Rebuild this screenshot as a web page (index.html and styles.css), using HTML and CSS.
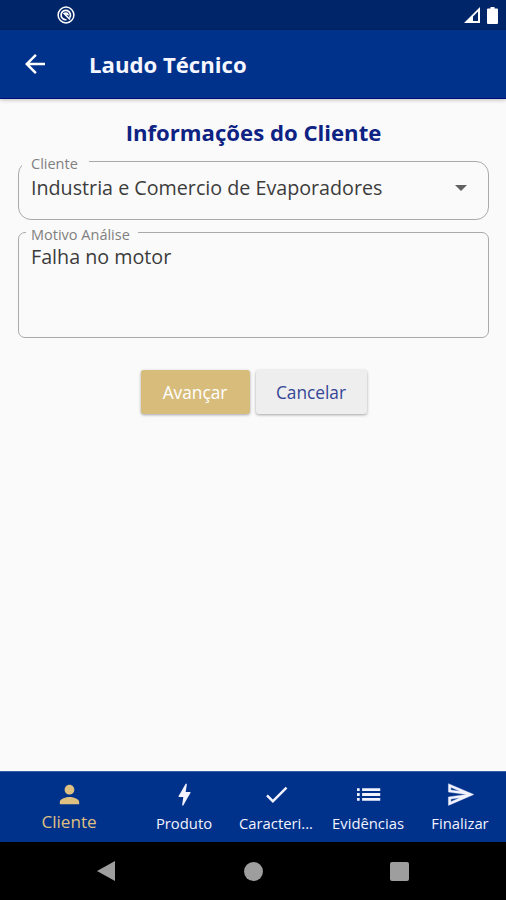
FILE: index.html
```html
<!DOCTYPE html>
<html lang="pt-BR">
<head>
<meta charset="utf-8">
<title>Laudo Técnico</title>
<link rel="stylesheet" href="styles.css">
</head>
<body>
<div class="status">
  <svg class="status-app" width="18" height="18" viewBox="0 0 18 18" fill="none" stroke="#fff"><circle cx="9" cy="9" r="7.9" stroke-width="1.5"/><path d="M12.600 11.800A4.700 4.700 0 1 0 9.500 13.700" stroke-width="1.700"/><path d="M6.500 7.200c2-2 5.300-1 5.500 2.300L9.500 9z" fill="#fff" stroke="none"/><path d="M6.500 7l6.500 6.500" stroke-width="1.600"/></svg>
  <svg class="signal" width="16" height="16" viewBox="0 0 16 16"><path fill="#fff" fill-rule="evenodd" d="M0 16L16 0v16zM9 9.500V14h5V4.600z"/></svg>
  <svg width="11" height="17" viewBox="0 0 11 17"><path fill="#fff" d="M3.500 0h4v1.500H10q1 0 1 1V16q0 1-1 1H1q-1 0-1-1V2.500q0-1 1-1h2.500z"/></svg>
</div>
<header class="appbar">
  <svg width="30" height="30" viewBox="0 0 24 24"><path fill="#fff" d="M20 11H7.830l5.590-5.590L12 4l-8 8 8 8 1.410-1.410L7.830 13H20z"/></svg>
  <h1>Laudo Técnico</h1>
</header>
<main>
  <h2>Informações do Cliente</h2>
  <fieldset class="field select">
    <legend><span>Cliente</span></legend>
    <div class="value"><span>Industria e Comercio de Evaporadores</span><svg width="12" height="6" viewBox="0 0 12 6"><path fill="#616161" d="M0 0h12L6 6z"/></svg></div>
  </fieldset>
  <fieldset class="field area">
    <legend><span>Motivo Análise</span></legend>
    <div class="value"><span>Falha no motor</span></div>
  </fieldset>
  <div class="actions">
    <button class="primary">Avançar</button>
    <button class="secondary">Cancelar</button>
  </div>
</main>
<nav class="tabs">
  <div class="tab active"><svg viewBox="0 0 24 24"><path d="M12 12c2.210 0 4-1.790 4-4s-1.790-4-4-4-4 1.790-4 4 1.790 4 4 4zm0 2c-2.670 0-8 1.340-8 4v2h16v-2c0-2.660-5.330-4-8-4z"/></svg><span>Cliente</span></div>
  <div class="tab"><svg viewBox="0 0 24 24"><path d="M11 21h-1l1-7H7.500c-.58 0-.57-.32-.38-.66C8.480 10.940 10.420 7.540 13 3h1l-1 7h3.500c.49 0 .56.330.470.510C12.960 17.550 11 21 11 21z"/></svg><span>Produto</span></div>
  <div class="tab"><svg viewBox="0 0 24 24"><path d="M9 16.170L4.830 12l-1.420 1.410L9 19 21 7l-1.410-1.410z"/></svg><span>Caracteri...</span></div>
  <div class="tab"><svg viewBox="0 0 24 24"><path d="M2.500 13.200h2.200v-2.400H2.500zm0 4h2.200v-2.400H2.500zm0-8h2.200V6.800H2.500zm4.200 4h15v-2.400h-15zm0 4h15v-2.400h-15zm0-10.400v2.400h15V6.800z"/></svg><span>Evidências</span></div>
  <div class="tab"><svg viewBox="0 0 24 24"><path d="M4.010 6.030l7.510 3.220-7.520-1 .010-2.220m7.500 8.720L4 17.970v-2.220l7.510-1M2.010 3L2 10l15 2-15 2 .010 7L23 12z" stroke="currentColor" stroke-width=".3"/></svg><span>Finalizar</span></div>
</nav>
<div class="system">
  <svg width="18" height="20" viewBox="0 0 18 20"><path fill="#9e9e9e" d="M18 0v20L0 10z"/></svg>
  <i class="home"></i>
  <i class="recent"></i>
</div>
</body>
</html>
```
FILE: styles.css
```css
* { box-sizing: border-box; }
body {
  margin: 0;
  height: 900px;
  display: flex;
  flex-direction: column;
  overflow: hidden;
  background: #fafafa;
  font-family: "Open Sans", "Noto Sans", sans-serif;
}
svg { display: block; flex: none; }
.status {
  height: 30px;
  display: flex;
  align-items: center;
  padding: 0 8px 0 57px;
  background: #002569;
}
.signal { margin: 0 7px 0 auto; }
.appbar {
  height: 69px;
  display: flex;
  align-items: center;
  padding: 0 20px;
  background: #00328c;
  border-bottom: 1px solid #000f78;
  box-shadow: 0 1px 4px rgba(0, 0, 0, .25);
}
h1 { margin: 0 0 0 39px; color: #f6f6ff; font-size: 22.150px; line-height: 30px; }
main { flex: 1; padding: 18px 17px 0 18px; }
h2 { margin: 0; text-align: center; color: #0e2284; font-size: 22.150px; line-height: 30px; }
.field {
  min-width: 0;
  margin: 0;
  padding: 0;
  border: 1.500px solid #aaa;
}
.field legend { height: 20px; padding: 0 9px; font-size: 14.500px; line-height: 16px; color: #808080; }
.field legend span { display: block; padding-top: 5px; }
.value { height: 20px; display: flex; align-items: center; justify-content: space-between; color: #3c3c3c; font-size: 19.700px; line-height: 20px; }
.select { height: 69px; margin-top: 4px; border-radius: 13px; }
.select legend { margin-left: 3px; padding-right: 11px; }
.select .value { margin-top: 7px; padding: 0 21px 0 12px; }
.area { height: 116px; margin-top: 2px; border-radius: 7px; }
.area legend { margin-left: 7px; padding: 0 8px 0 5px; }
.area .value { margin-top: 5px; padding: 0 12px; }
.actions { display: flex; justify-content: center; gap: 6px; margin-top: 32px; }
button {
  height: 44px;
  padding: 1px 0 0;
  border: 0;
  border-radius: 3px;
  font: 17.300px/43px "Open Sans", sans-serif;
  box-shadow: 0 1px 3px rgba(0, 0, 0, .35);
}
.primary { width: 109px; background: #d8bc7b; color: #fff; }
.secondary { width: 111px; background: #eee; color: #354596; }
.tabs {
  height: 71px;
  display: grid;
  grid-template-columns: 138px repeat(4, 92px);
  background: #00328c;
  border-top: 1px solid #345ba3;
}
.tab { display: flex; flex-direction: column; align-items: center; padding-top: 8px; color: #f3f3ff; font-size: 14.800px; line-height: 20px; white-space: nowrap; }
.tab svg { width: 29px; height: 29px; fill: currentColor; margin-bottom: 4px; }
.tab.active { color: #dfc080; font-size: 17.100px; }
.tab.active svg { margin-bottom: 3px; }
.system { height: 58px; display: flex; align-items: center; padding: 0 97px; justify-content: space-between; background: #000; }
.home, .recent { width: 19px; height: 19px; background: #9e9e9e; }
.home { border-radius: 50%; margin-left: 2px; }
.recent { border-radius: 2px; }
```
